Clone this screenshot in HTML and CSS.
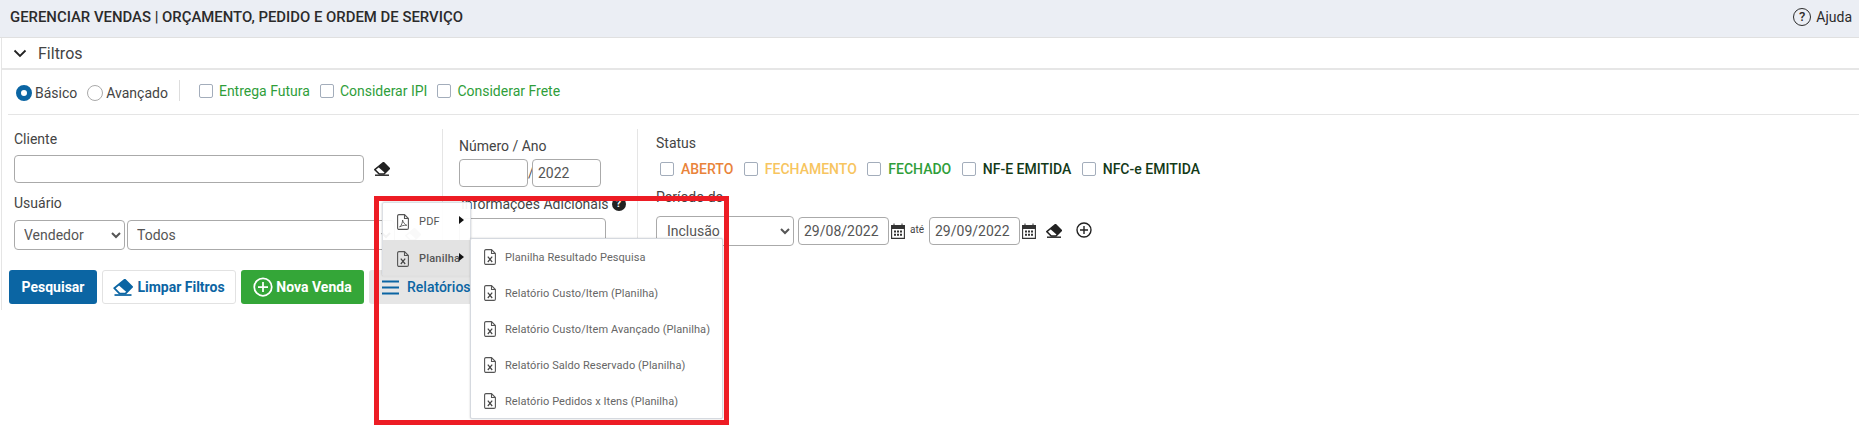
FILE: index.html
```html
<!DOCTYPE html>
<html>
<head>
	<meta charset="UTF-8">
	<title>Gerenciar Vendas</title>
	<link rel="stylesheet" href="styles.css">
</head>
<body>
	<svg class="sprites" width="0" height="0">
		<symbol id="eraser" viewBox="0 0 16 14">
			<path d="M9.5 .5 15.5 6.5 10 12H5.2L.8 7.6Z" fill="#fff" stroke="currentColor" stroke-width="1.5" stroke-linejoin="round"/>
			<path d="M9.5 .5 15.5 6.5 11 11 4 4.800Z" fill="currentColor"/>
			<path d="M1 13.2H15" stroke="currentColor" stroke-width="1.4"/>
		</symbol>
		<symbol id="calendar" viewBox="0 0 14 16">
			<path d="M.6 2.5H13.4V15.4H.6Z" fill="none" stroke="#333" stroke-width="1.1"/>
			<path d="M.6 2.5H13.4V5.5H.6ZM3 .5V2.5M11 .5V2.5" fill="#333" stroke="#333"/>
			<path d="M3 7.5H5V9.5H3ZM6 7.5H8V9.5H6ZM9 7.5H11V9.5H9ZM3 10.8H5V12.8H3ZM6 10.8H8V12.8H6ZM9 10.8H11V12.8H9Z" fill="#333"/>
		</symbol>
		<symbol id="plus" viewBox="0 0 16 16">
			<circle cx="8" cy="8" r="7" fill="none" stroke="currentColor" stroke-width="1.4"/>
			<path d="M8 4V12M4 8H12" stroke="currentColor" stroke-width="1.4"/>
		</symbol>
		<symbol id="file-x" viewBox="0 0 12 16">
			<path d="M1.5 .6H7.5L11.4 4.5V14A1.4 1.4 0 0 1 10 15.4H2A1.4 1.4 0 0 1 .6 14V2A1.4 1.4 0 0 1 2 .6ZM7.5 .6V4.5H11.4" fill="none" stroke="#555" stroke-width="1.1"/>
			<path d="M3.8 7.6 8.2 13M8.2 7.6 3.8 13" stroke="#444" stroke-width="1.2"/>
		</symbol>
		<symbol id="file-pdf" viewBox="0 0 12 16">
			<path d="M1.5 .6H7.5L11.4 4.5V14A1.4 1.4 0 0 1 10 15.4H2A1.4 1.4 0 0 1 .6 14V2A1.4 1.4 0 0 1 2 .6ZM7.5 .6V4.5H11.4" fill="none" stroke="#555" stroke-width="1.1"/>
			<path d="M5.6 6C5.6 8.500 4.500 11.500 2.600 13 4.500 11.700 7 11 9.800 11.300 8 10.500 6 8.500 5.600 6Z" fill="none" stroke="#555" stroke-width=".9"/>
		</symbol>
	</svg>

	<div class="page-header">
		<span class="page-title">GERENCIAR VENDAS | ORÇAMENTO, PEDIDO E ORDEM DE SERVIÇO</span>
		<span class="help"><span class="help-icon">?</span>Ajuda</span>
	</div>

	<div class="panel">
		<div class="panel-head">
			<svg class="chevron" width="14" height="9" viewBox="0 0 14 9"><path d="M1.500 1.500 7 7 12.500 1.500" fill="none" stroke="#222" stroke-width="1.800"/></svg>
			<span>Filtros</span>
		</div>

		<div class="options">
			<label class="radio"><input type="radio" name="modo" checked>Básico</label>
			<label class="radio"><input type="radio" name="modo">Avançado</label>
			<div class="option-checks">
				<label class="check green"><input type="checkbox">Entrega Futura</label>
				<label class="check green"><input type="checkbox">Considerar IPI</label>
				<label class="check green"><input type="checkbox">Considerar Frete</label>
			</div>
		</div>

		<div class="filters">
			<div class="col col-one">
				<div class="field-label">Cliente</div>
				<div class="line">
					<input type="text" class="input cliente">
					<svg class="icon-eraser"><use href="#eraser"/></svg>
				</div>
				<div class="field-label usuario-label">Usuário</div>
				<div class="line usuario-line">
					<select class="input vendedor"><option>Vendedor</option></select>
					<select class="input todos"><option>Todos</option></select>
					<svg class="icon-eraser faded"><use href="#eraser"/></svg>
				</div>
			</div>

			<div class="col col-two">
				<div class="field-label numero-label">Número / Ano</div>
				<div class="line">
					<input type="text" class="input numero">
					<span class="slash">/</span>
					<input type="text" class="input numero ano" value="2022">
				</div>
				<div class="field-label info-label">Informações Adicionais <span class="info-icon">?</span></div>
				<input type="text" class="input info">
			</div>

			<div class="col col-three">
				<div class="field-label status-label">Status</div>
				<div class="status-list">
					<label class="check strong orange"><input type="checkbox">ABERTO</label>
					<label class="check strong yellow"><input type="checkbox">FECHAMENTO</label>
					<label class="check strong green"><input type="checkbox">FECHADO</label>
					<label class="check strong dark"><input type="checkbox">NF-E EMITIDA</label>
					<label class="check strong dark"><input type="checkbox">NFC-e EMITIDA</label>
				</div>
				<div class="field-label periodo-label">Período de</div>
				<div class="line periodo-line">
					<select class="input inclusao"><option>Inclusão</option></select>
					<input type="text" class="input date" value="29/08/2022">
					<svg class="icon-cal"><use href="#calendar"/></svg>
					<span class="ate">até</span>
					<input type="text" class="input date" value="29/09/2022">
					<svg class="icon-cal"><use href="#calendar"/></svg>
					<svg class="icon-eraser after-cal"><use href="#eraser"/></svg>
					<svg class="icon-plus"><use href="#plus"/></svg>
				</div>
			</div>
		</div>

		<div class="actions">
			<button type="button" class="btn btn-blue">Pesquisar</button>
			<button type="button" class="btn btn-white"><svg class="btn-eraser"><use href="#eraser"/></svg>Limpar Filtros</button>
			<button type="button" class="btn btn-green"><svg class="btn-plus"><use href="#plus"/></svg>Nova Venda</button>
			<div class="report">
				<button type="button" class="btn btn-grey">
					<svg class="burger" width="17" height="15" viewBox="0 0 17 15"><path d="M0 1.500H17M0 7.500H17M0 13.500H17" stroke="#0b65a3" stroke-width="1.800"/></svg>Relatórios
				</button>
				<ul class="menu">
					<li class="menu-item">
						<svg class="file"><use href="#file-pdf"/></svg>PDF<span class="caret"></span>
					</li>
					<li class="menu-item active">
						<svg class="file"><use href="#file-x"/></svg>Planilha<span class="caret"></span>
						<ul class="submenu">
							<li><svg class="file"><use href="#file-x"/></svg>Planilha Resultado Pesquisa</li>
							<li><svg class="file"><use href="#file-x"/></svg>Relatório Custo/Item (Planilha)</li>
							<li><svg class="file"><use href="#file-x"/></svg>Relatório Custo/Item Avançado (Planilha)</li>
							<li><svg class="file"><use href="#file-x"/></svg>Relatório Saldo Reservado (Planilha)</li>
							<li><svg class="file"><use href="#file-x"/></svg>Relatório Pedidos x Itens (Planilha)</li>
						</ul>
					</li>
				</ul>
			</div>
		</div>
	</div>

	<div class="red-box"></div>
</body>
</html>
```

FILE: styles.css
```css
* {
	box-sizing: border-box;
}
body {
	margin: 0;
	height: 440px;
	overflow: hidden;
	background: white;
	color: #444;
	font-family: Roboto, "Liberation Sans", sans-serif;
	font-size: 14px;
	position: relative;
}
.sprites {
	position: absolute;
}
.page-header {
	height: 38px;
	padding: 0 7px 4px 10px;
	display: flex;
	justify-content: space-between;
	align-items: center;
	background: #ebeef4;
	border-bottom: 1px solid #e0e0e0;
}
.page-title {
	font-weight: 500;
	color: #2b2b2b;
	font-size: 14.9px;
}
.help {
	display: flex;
	align-items: center;
	gap: 5px;
	color: #2b2b2b;
}
.help-icon {
	width: 18px;
	height: 18px;
	border: 1.6px solid #2b2b2b;
	border-radius: 50%;
	display: flex;
	justify-content: center;
	align-items: center;
	font-size: 13px;
	font-weight: 500;
}

.panel {
	height: 272px;
	margin-left: 1px;
	border-left: 1px solid #e5e5e5;
}
.panel-head {
	height: 32px;
	padding-left: 11px;
	display: flex;
	align-items: center;
	gap: 11px;
	font-size: 16px;
	color: #444;
	border-bottom: 2px solid #e6e6e6;
}

.options {
	height: 45px;
	margin-left: 6px;
	padding-left: 8px;
	display: flex;
	align-items: flex-start;
	border-bottom: 1px solid #e5e5e5;
}
.radio {
	display: flex;
	align-items: center;
	height: 16px;
	margin: 15px 10px 0 0;
	gap: 3px;
	font-size: 14px;
}
.radio + .radio {
	margin-right: 4px;
}
.option-checks {
	height: 21px;
	margin: 10px 0 0 7px;
	padding-left: 19px;
	display: flex;
	align-items: center;
	gap: 10px;
	border-left: 1px solid #ddd;
}
.radio input {
	appearance: none;
	width: 16px;
	height: 16px;
	margin: 0;
	border: 1px solid #aaa;
	border-radius: 50%;
	background: white;
}
.radio input:checked {
	border: 5px solid #0b65a3;
}
.check {
	display: flex;
	align-items: center;
	gap: 6px;
	font-size: 14px;
}
.check input {
	appearance: none;
	width: 14px;
	height: 14px;
	margin: 0;
	border: 1px solid #a3adbb;
	border-radius: 2px;
	background: white;
}
.green {
	color: #2f9e3a;
}
.orange {
	color: #e9833a;
}
.yellow {
	color: #f7c55f;
}
.dark {
	color: #133a18;
}
.strong {
	font-weight: 500;
	font-size: 14px;
	gap: 7px;
}

.filters {
	height: 133px;
	margin-top: 14px;
	display: flex;
}
.col {
	height: 133px;
}
.col-one {
	width: 441px;
	padding-left: 12px;
	border-right: 1px solid #e5e5e5;
}
.col-two {
	width: 195px;
	padding-left: 16px;
	border-right: 1px solid #e5e5e5;
}
.col-three {
	padding-left: 18px;
}
.field-label {
	height: 20px;
	line-height: 20px;
	color: #444;
}
.line {
	display: flex;
	align-items: center;
}
.input {
	height: 28px;
	padding: 0 9px;
	margin: 0;
	border: 1px solid #aaa;
	border-radius: 4px;
	background: white;
	color: #555;
	font-family: inherit;
	font-size: 14px;
}
select.input {
	padding: 0 5px;
}
.col-one .line:nth-child(2) {
	margin-top: 6px;
}
.cliente {
	width: 350px;
}
.icon-eraser {
	width: 16px;
	height: 14px;
	margin-left: 10px;
	color: #222;
}
.usuario-label {
	margin-top: 10px;
}
.usuario-line {
	margin-top: 7px;
}
.usuario-line .input {
	height: 30px;
}
.vendedor {
	width: 111px;
}
.todos {
	width: 268px;
	margin-left: 2px;
}
.faded {
	margin-left: 10px;
	color: #aaa;
}

.numero-label {
	margin-top: 7px;
}
.col-two .line {
	margin-top: 3px;
}
.numero {
	width: 69px;
}
.ano {
	padding: 0 5px;
}
.slash {
	width: 4px;
	color: #555;
}
.info-label {
	margin-top: 7px;
	display: flex;
	align-items: center;
	gap: 3px;
	padding-left: 2px;
}
.info-icon {
	width: 14px;
	height: 14px;
	border-radius: 50%;
	background: #222;
	color: white;
	display: flex;
	justify-content: center;
	align-items: center;
	font-size: 11px;
	font-weight: 700;
}
.info {
	width: 147px;
	height: 32px;
	margin-top: 4px;
}

.status-label {
	margin-top: 4px;
}
.status-list {
	display: flex;
	gap: 10.5px;
	margin: 8px 0 0 4px;
}
.periodo-label {
	margin-top: 10px;
}
.periodo-line {
	margin-top: 9px;
}
.inclusao {
	width: 138px;
	height: 30px;
}
select.inclusao {
	padding: 0 6px;
}
.date {
	width: 91px;
	margin-left: 4px;
	padding: 0 5px;
}
.icon-cal {
	width: 14px;
	height: 16px;
	margin-left: 2px;
}
.ate {
	width: 19px;
	margin: 0 0 4px 5px;
	font-size: 10px;
}
.ate + .date {
	margin-left: 0;
}
.after-cal {
	margin-left: 10px;
}
.icon-plus {
	width: 16px;
	height: 16px;
	margin: 0 0 2px 14px;
	color: #222;
}

.actions {
	height: 34px;
	margin-top: 8px;
	padding-left: 7px;
	display: flex;
	gap: 5px;
}
.btn {
	height: 34px;
	padding: 0;
	display: flex;
	justify-content: center;
	align-items: center;
	border: 1px solid transparent;
	border-radius: 3px;
	font-family: inherit;
	font-size: 14px;
	font-weight: 700;
}
.btn-blue {
	width: 88px;
	background: #0b65a3;
	color: white;
}
.btn-white {
	width: 134px;
	gap: 4px;
	background: white;
	border-color: #e2e2e2;
	color: #0b65a3;
}
.btn-eraser {
	width: 20px;
	height: 17px;
	color: #0b65a3;
}
.btn-green {
	width: 123px;
	gap: 3px;
	background: #34a638;
	color: white;
}
.btn-plus {
	width: 20px;
	height: 20px;
	color: white;
}
.report {
	position: relative;
}
.btn-grey {
	width: 120px;
	justify-content: flex-start;
	padding-left: 12px;
	gap: 8px;
	background: #e6e6e6;
	color: #0b65a3;
	font-weight: 500;
	font-size: 14px;
	white-space: nowrap;
}
.burger {
	flex: none;
}

.menu, .submenu {
	list-style: none;
	margin: 0;
	padding: 0;
}
.menu {
	position: absolute;
	left: 13px;
	top: -68px;
	width: 89px;
	height: 74px;
	background: rgba(255, 255, 255, 0.93);
	border: 1px solid #dcdfe4;
	border-radius: 2px;
	box-shadow: 0 0 2px rgba(0, 0, 0, 0.25);
}
.menu-item {
	height: 37px;
	padding-left: 14px;
	display: flex;
	align-items: center;
	gap: 10px;
	font-size: 11px;
	letter-spacing: 0.2px;
	color: #555;
	position: relative;
}
.menu-item.active {
	background: rgba(225, 225, 225, 0.92);
	font-weight: 500;
}
.file {
	width: 12px;
	height: 16px;
	flex: none;
}
.caret {
	position: absolute;
	left: 76px;
	top: 13px;
	border-left: 5px solid #111;
	border-top: 4px solid transparent;
	border-bottom: 4px solid transparent;
}
.submenu {
	position: absolute;
	left: 87px;
	top: -2px;
	width: 253px;
	height: 181px;
	padding: 0;
	background: white;
	border: 1px solid #d5d9df;
	border-radius: 2px;
	box-shadow: 0 0 2px rgba(0, 0, 0, 0.2);
	font-weight: 400;
}
.submenu li {
	height: 36px;
	padding-left: 13px;
	display: flex;
	align-items: center;
	gap: 9px;
	white-space: nowrap;
	font-size: 11px;
	letter-spacing: 0.07px;
	color: #666;
}

.red-box {
	position: absolute;
	left: 374px;
	top: 196px;
	width: 355px;
	height: 229px;
	border: 5px solid #ed1c24;
}
```
